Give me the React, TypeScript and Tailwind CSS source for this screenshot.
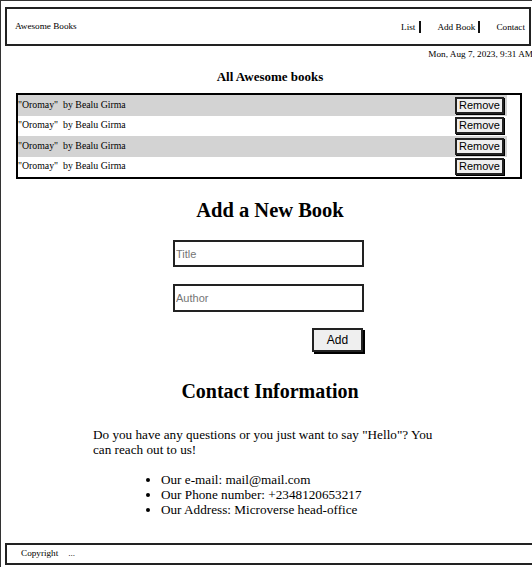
import React from "react";

const books = [1, 2, 3, 4].map((i) => ({ id: i, title: "Oromay", author: "Bealu Girma" }));

export default function App() {
  return (
    <div className="w-[532px] h-[567px] overflow-hidden bg-white text-black font-['Liberation_Serif',serif]">
      <div className="w-[540px] min-h-[567px] border-l border-t border-[#333]">
        {/* header */}
        <header className="mt-[6px] ml-[4px] w-[526px] h-[39px] border-2 border-[#222] flex items-center justify-between pl-[8px] pr-[4px] text-[9.2px]">
          <span>Awesome Books</span>
          <ul className="flex items-center">
            <li className="pr-[4px] border-r-2 border-[#111] leading-[12px]">List</li>
            <li className="ml-[16px] pr-[3px] border-r-2 border-[#111] leading-[12px]">Add Book</li>
            <li className="ml-[16px] leading-[12px]">Contact</li>
          </ul>
        </header>
        <p className="w-[532px] text-right text-[9.2px] leading-[12px] mt-[2px] whitespace-nowrap">
          Mon, Aug 7, 2023, 9:31 AM
        </p>

        {/* book list */}
        <h3 className="w-[538px] mt-[9px] text-center text-[13px] leading-[15px] font-bold">All Awesome books</h3>
        <ul className="mt-[9px] ml-[15px] w-[506px] border-2 border-black pr-[13px]">
          {books.map((b, i) => (
            <li
              key={b.id}
              className={`h-[20.5px] flex items-center justify-between text-[9.8px] ${i % 2 === 0 ? "bg-[#d3d3d3]" : "bg-white"}`}
            >
              <span>
                "{b.title}"<span className="ml-[5px]">by {b.author}</span>
              </span>
              <button className="h-[17px] px-[2px] border-2 border-[#222] shadow-[1px_1px_0_#000] bg-[#efefef] text-[11px] leading-[11px] font-['Liberation_Sans',sans-serif] mr-[3px]">
                Remove
              </button>
            </li>
          ))}
        </ul>

        {/* add form */}
        <h2 className="w-[538px] mt-[18px] text-center text-[20.5px] leading-[27px] font-bold">Add a New Book</h2>
        <form className="ml-[172px] w-[191px] flex flex-col items-end font-['Liberation_Sans',sans-serif]">
          <input
            placeholder="Title"
            className="mt-[16px] w-[191px] h-[27px] border-2 border-[#222] px-[1px] text-[11px] placeholder:text-[#757575] outline-none"
          />
          <input
            placeholder="Author"
            className="mt-[17px] w-[191px] h-[28px] border-2 border-[#222] px-[1px] text-[11px] placeholder:text-[#757575] outline-none"
          />
          <button
            type="button"
            className="mt-[16px] w-[51px] h-[24px] border-2 border-[#222] shadow-[2px_2px_0_#000] bg-[#efefef] text-[12px] mr-[1px]"
          >
            Add
          </button>
        </form>

        {/* contact */}
        <h2 className="w-[538px] mt-[26px] text-center text-[20px] leading-[27px] font-bold">Contact Information</h2>
        <p className="mt-[22px] ml-[92px] w-[352px] text-[13.2px] leading-[15px]">
          Do you have any questions or you just want to say "Hello"? You can reach out to us!
        </p>
        <ul className="mt-[15px] ml-[92px] pl-[68px] list-disc text-[13.2px] leading-[15px]">
          <li>Our e-mail: mail@mail.com</li>
          <li>Our Phone number: +2348120653217</li>
          <li>Our Address: Microverse head-office</li>
        </ul>

        {/* footer */}
        <footer className="mt-[26px] ml-[4px] w-[534px] h-[22px] border-2 border-[#222] flex items-center pl-[14px] text-[9.2px]">
          <span>Copyright</span>
          <span className="ml-[10px]">...</span>
        </footer>
      </div>
    </div>
  );
}
